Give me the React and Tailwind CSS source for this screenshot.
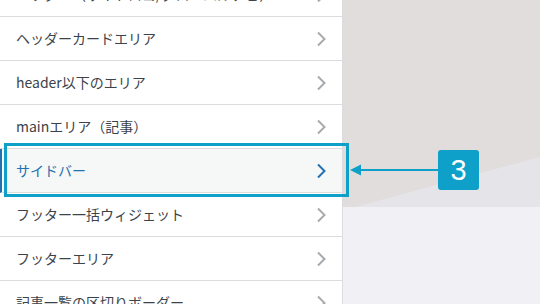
import React from 'react';

const rows = [
  'ヘッダー（サイトロゴ/グローバルナビ）',
  'ヘッダーカードエリア',
  'header以下のエリア',
  'mainエリア（記事）',
  'サイドバー',
  'フッター一括ウィジェット',
  'フッターエリア',
  '記事一覧の区切りボーダー',
];

const Chevron = ({ active }) => (
  <svg width="10" height="16" viewBox="0 0 10 16" className="shrink-0">
    <path
      d="M2 1.5 L8.5 8 L2 14.5"
      fill="none"
      stroke={active ? '#2271b1' : '#a7aaad'}
      strokeWidth="2"
    />
  </svg>
);

export default function App() {
  return (
    <div
      className="relative flex w-[540px] h-[304px] overflow-hidden"
      style={{ fontFamily: '"Noto Sans CJK JP", "Noto Sans", sans-serif' }}
    >
      {/* customizer panel */}
      <div className="w-[343px] shrink-0 bg-white border-r border-[#dcdcde]">
        <ul className="-mt-[27px]">
          {rows.map((label) => {
            const active = label === 'サイドバー';
            return (
              <li
                key={label}
                className={
                  active
                    ? 'flex h-[44px] items-center justify-between border-b border-[#dcdcde] border-l-2 border-l-[#2271b1] bg-[#f6f7f7] pl-[14px] pr-[16px] text-[14px] text-[#2271b1]'
                    : 'flex h-[44px] items-center justify-between border-b border-[#dcdcde] pl-4 pr-[16px] text-[14px] text-[#3c434a]'
                }
              >
                <span className="whitespace-nowrap">{label}</span>
                <Chevron active={active} />
              </li>
            );
          })}
        </ul>
      </div>

      {/* preview background */}
      <div className="flex flex-1 flex-col">
        <div className="relative h-[207px] bg-[#e0dddc]">
          <svg className="absolute inset-0" width="197" height="207" viewBox="0 0 197 207">
            <polygon points="12,207 197,157 197,207" fill="#e5e4e9" />
          </svg>
        </div>
        <div className="flex-1 bg-[#f1f0f5]" />
      </div>

      {/* annotation */}
      <div className="absolute left-[4px] top-[143px] w-[345px] h-[54px] border-[3px] border-[#0ea0c9]" />
      <div className="absolute left-[350px] top-[164px] flex items-center">
        <svg width="89" height="12" viewBox="0 0 89 12">
          <polygon points="0,6 11,0.5 11,11.5" fill="#0ea0c9" />
          <rect x="10" y="5" width="79" height="2" fill="#0ea0c9" />
        </svg>
      </div>
      <div className="absolute left-[438px] top-[150px] flex h-[40px] w-[41px] items-center justify-center rounded-[3px] bg-[#0ea0c9] text-[29px] leading-none text-white" style={{ fontFamily: '"Liberation Sans", Arial, sans-serif' }}>
        3
      </div>
    </div>
  );
}
